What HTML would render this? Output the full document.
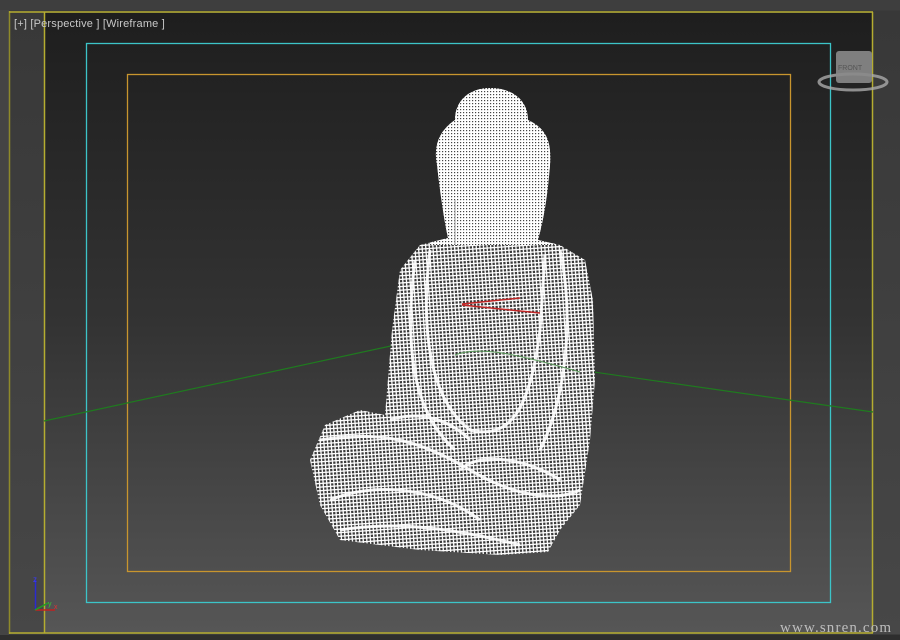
<!DOCTYPE html>
<html><head><meta charset="utf-8"><style>
html,body{margin:0;padding:0;width:900px;height:640px;overflow:hidden;background:#3c3c3c}
svg{display:block}
</style></head><body>
<svg width="900" height="640" viewBox="0 0 900 640" xmlns="http://www.w3.org/2000/svg">
<defs>
<linearGradient id="bg" x1="0" y1="0" x2="0" y2="1">
<stop offset="0" stop-color="#1e1e1e"/><stop offset="0.5" stop-color="#333"/><stop offset="1" stop-color="#565656"/>
</linearGradient>
<linearGradient id="side" x1="0" y1="0" x2="0" y2="1">
<stop offset="0" stop-color="#383838"/><stop offset="1" stop-color="#474747"/>
</linearGradient>
<pattern id="grid" width="3.6" height="3.6" patternUnits="userSpaceOnUse" patternTransform="rotate(-4)">
<rect width="3.6" height="3.6" fill="#3a3a3a"/>
<rect width="3.6" height="1.3" fill="#fff"/><rect width="1.3" height="3.6" fill="#fff"/>
</pattern>
<pattern id="dense" width="3" height="3" patternUnits="userSpaceOnUse">
<rect width="3" height="3" fill="#fff"/><rect x="1" y="1" width="1.2" height="1.2" fill="#444"/>
</pattern>
<clipPath id="body"><path d="M490,88 C512,88 528,100 528,120 C545,128 552,140 550,165 C548,190 545,215 538,240 L560,245 585,260 593,300 595,380 590,440 580,505 560,530 548,552 500,555 420,550 340,540 320,505 310,460 325,425 360,410 385,415 392,330 400,270 420,245 448,238 C443,215 440,190 437,165 C433,145 440,130 455,120 C455,100 470,88 490,88Z"/></clipPath>
</defs>
<rect x="0" y="0" width="900" height="640" fill="#3b3b3b"/>
<rect x="0" y="0" width="900" height="10" fill="#3e3e3e"/>
<rect x="0" y="10" width="9" height="630" fill="#444"/>
<rect x="9" y="11" width="864" height="623" fill="url(#side)"/>
<rect x="873" y="11" width="27" height="623" fill="url(#side)"/>
<rect x="44" y="13" width="829" height="620" fill="url(#bg)"/>
<line x1="9.5" y1="11" x2="9.5" y2="634" stroke="#8f8a2a" stroke-width="1.5"/>
<line x1="44.5" y1="12" x2="44.5" y2="633" stroke="#b5ad30" stroke-width="1.5"/>
<line x1="872.5" y1="12" x2="872.5" y2="633" stroke="#b5ad30" stroke-width="1.5"/>
<line x1="9" y1="12" x2="873" y2="12" stroke="#b5ad30" stroke-width="1.5"/>
<line x1="9" y1="633" x2="873" y2="633" stroke="#b5ad30" stroke-width="1.5"/>
<rect x="0" y="635" width="900" height="5" fill="#2e2e2e"/>
<rect x="86.5" y="43.5" width="744" height="559" fill="none" stroke="#3cc4c8" stroke-width="1.3"/>
<rect x="127.5" y="74.5" width="663" height="497" fill="none" stroke="#c8952e" stroke-width="1.3"/>
<line x1="44" y1="421" x2="400" y2="344" stroke="#1f7a1f" stroke-width="1.2"/>
<line x1="440" y1="350" x2="873" y2="412" stroke="#1f7a1f" stroke-width="1.2"/>
<g clip-path="url(#body)">
<rect x="300" y="80" width="310" height="480" fill="url(#grid)"/>
<rect x="430" y="85" width="125" height="160" fill="url(#dense)"/>
<g fill="none" stroke="#fff" stroke-width="3" opacity="0.9">
<path d="M430,250 C420,330 430,400 470,430 C510,440 530,410 540,330 L545,255"/>
<path d="M415,260 C405,340 410,410 455,450"/>
<path d="M560,250 C575,320 565,400 540,450"/>
<path d="M320,440 C380,430 420,440 470,470 C520,500 560,500 580,490"/>
<path d="M330,500 C380,480 440,490 480,520"/>
<path d="M340,530 C400,520 460,530 520,545"/>
<path d="M460,470 C480,450 530,460 560,480"/>
<path d="M390,420 C420,410 450,420 470,440"/>
</g>
<line x1="455" y1="200" x2="455" y2="245" stroke="#999" stroke-width="1"/>
</g>
<path d="M462,304 L520,298 M462,305 L540,313" stroke="#c02525" stroke-width="1.5"/>
<path d="M455,355 C480,345 520,355 580,372" stroke="#5a9a5a" stroke-width="1" fill="none"/>
<text x="14" y="27" font-family="Liberation Sans, sans-serif" font-size="11" letter-spacing="0.2" fill="#c8c8c8" textLength="151">[+] [Perspective ] [Wireframe ]</text>
<ellipse cx="853" cy="82" rx="34" ry="8" fill="none" stroke="#aaa" stroke-width="3" opacity="0.8"/>
<rect x="836" y="51" width="36" height="32" rx="3" fill="#8a8a8a" opacity="0.9"/>
<text x="838" y="70" font-family="Liberation Sans, sans-serif" font-size="7" fill="#555">FRONT</text>
<line x1="35.5" y1="580" x2="35.5" y2="610" stroke="#2a2ad0" stroke-width="1.5"/>
<text x="33" y="582" font-family="Liberation Sans, sans-serif" font-size="8" fill="#3a3aff">z</text>
<line x1="35" y1="610" x2="55" y2="610" stroke="#c02020" stroke-width="1.5"/>
<line x1="35" y1="610" x2="48" y2="603" stroke="#20a020" stroke-width="1.5"/>
<text x="48" y="606" font-family="Liberation Sans, sans-serif" font-size="7" fill="#3c3">y</text>
<text x="54" y="609" font-family="Liberation Sans, sans-serif" font-size="7" fill="#d33">x</text>
<text x="780" y="632" font-family="Liberation Serif, serif" font-size="15" fill="#bdbdbd" textLength="111">www.snren.com</text>
</svg>
</body></html>
